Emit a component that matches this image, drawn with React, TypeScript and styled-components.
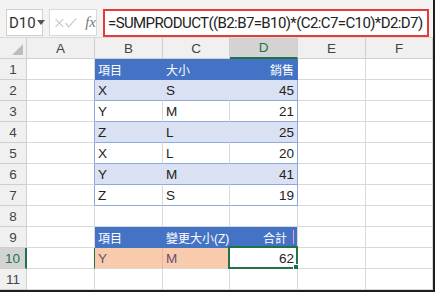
import styled, { createGlobalStyle } from 'styled-components';

const GlobalStyle = createGlobalStyle`
  html, body {
    margin: 0;
    padding: 0;
    background: #ffffff;
  }
  body {
    font-family: "Liberation Sans", "Noto Sans CJK TC", sans-serif;
  }
`;

const GREEN = '#217346';
const GRID = '#d9d9d9';
const BLUE_LINE = '#8ea9db';

type CellSpec = {
  text?: string;
  bg?: string;
  color?: string;
  right?: string;
  bottom?: string;
  align?: 'left' | 'right';
  cjk?: boolean;
  selected?: boolean;
  caret?: boolean;
};

const Frame = styled.div`
  width: 433px;
  height: 290px;
  border-right: 2px solid #1e1e1e;
  border-bottom: 2px solid #1e1e1e;
  overflow: hidden;
  display: flex;
  flex-direction: column;
  background: #fff;
`;

const FormulaBar = styled.div`
  height: 41px;
  background: #f3f3f3;
  display: flex;
  align-items: flex-start;
  padding: 9px 0 0 6px;
  box-sizing: border-box;
  gap: 6px;
`;

const NameBox = styled.div`
  width: 37px;
  height: 27px;
  box-sizing: border-box;
  background: #fff;
  border: 1px solid #cfcfcf;
  display: flex;
  align-items: center;
  padding-left: 2px;
  font-family: Roboto, sans-serif;
  font-size: 15px;
  color: #333;
`;

const Arrow = styled.span`
  width: 0;
  height: 0;
  margin-left: 1px;
  border-left: 4px solid transparent;
  border-right: 4px solid transparent;
  border-top: 5px solid #555;
`;

const FxBox = styled.div`
  width: 48px;
  height: 27px;
  box-sizing: border-box;
  background: #fff;
  border: 1px solid #dadada;
  display: flex;
  align-items: center;
  padding-left: 4px;
  gap: 2px;
`;

const FxMark = styled.span`
  font-family: "Liberation Serif", serif;
  font-style: italic;
  font-size: 15px;
  color: #7a7a7a;
  margin-left: 3px;
`;

const FormulaInput = styled.div`
  width: 326px;
  height: 28px;
  box-sizing: border-box;
  background: #fff;
  border: 2px solid #e43b3b;
  display: flex;
  align-items: center;
  padding-left: 3px;
  font-family: Roboto, sans-serif;
  font-size: 15px;
  letter-spacing: -0.6px;
  color: #222;
  white-space: nowrap;
`;

const Divider = styled.div`
  height: 6px;
  background: #f3f3f3;
  border-bottom: 1px solid #dadada;
`;

const Sheet = styled.div`
  display: grid;
  grid-template-columns: 27px 68px 68px 67px 68px 68px 1fr;
  grid-auto-rows: 21px;
  font-size: 13.5px;
`;

const Corner = styled.div`
  background: #f0f0f0;
  border-right: 1px solid #cfcfcf;
  border-bottom: 1px solid #cfcfcf;
  position: relative;
  &::after {
    content: '';
    position: absolute;
    right: 3px;
    bottom: 3px;
    border-left: 11px solid transparent;
    border-bottom: 11px solid #bdbdbd;
  }
`;

const ColHead = styled.div<{ $active?: boolean }>`
  background: ${(p) => (p.$active ? '#d3d3d3' : '#f0f0f0')};
  color: ${(p) => (p.$active ? GREEN : '#444')};
  border-right: 1px solid #cfcfcf;
  border-bottom: ${(p) => (p.$active ? `2px solid ${GREEN}` : '1px solid #cfcfcf')};
  display: flex;
  align-items: center;
  justify-content: center;
  box-sizing: border-box;
`;

const RowHead = styled.div<{ $active?: boolean }>`
  background: ${(p) => (p.$active ? '#d3d3d3' : '#f0f0f0')};
  color: ${(p) => (p.$active ? GREEN : '#444')};
  border-right: ${(p) => (p.$active ? `2px solid ${GREEN}` : '1px solid #cfcfcf')};
  border-bottom: 1px solid #cfcfcf;
  display: flex;
  align-items: center;
  justify-content: center;
  box-sizing: border-box;
`;

const Cell = styled.div<{
  $bg: string;
  $color: string;
  $right: string;
  $bottom: string;
  $align: string;
  $cjk?: boolean;
}>`
  background: ${(p) => p.$bg};
  color: ${(p) => p.$color};
  border-right: 1px solid ${(p) => p.$right};
  border-bottom: 1px solid ${(p) => p.$bottom};
  display: flex;
  align-items: center;
  justify-content: ${(p) => (p.$align === 'right' ? 'flex-end' : 'flex-start')};
  padding: 0 3px;
  box-sizing: border-box;
  white-space: nowrap;
  font-size: ${(p) => (p.$cjk ? '12px' : '13.5px')};
  position: relative;
`;

const Selection = styled.div`
  position: absolute;
  left: -2px;
  top: -2px;
  right: -1px;
  bottom: -1px;
  border: 2px solid ${GREEN};
  pointer-events: none;
  &::after {
    content: '';
    position: absolute;
    right: -4px;
    bottom: -4px;
    width: 5px;
    height: 5px;
    background: ${GREEN};
    border: 1px solid #fff;
  }
`;

const Caret = styled.span`
  display: inline-block;
  width: 1px;
  height: 14px;
  background: #f0a0c8;
  margin-left: 6px;
`;

const cols = ['A', 'B', 'C', 'D', 'E', 'F'];

const HEAD_BG = '#4472c4';
const BAND = '#d9e1f2';
const ORANGE = '#f8cbad';

const tableRows: [string, string, string][] = [
  ['X', 'S', '45'],
  ['Y', 'M', '21'],
  ['Z', 'L', '25'],
  ['X', 'L', '20'],
  ['Y', 'M', '41'],
  ['Z', 'S', '19'],
];

function buildRows(): CellSpec[][] {
  const rows: CellSpec[][] = [];
  const head = (text: string, extra: Partial<CellSpec> = {}): CellSpec => ({
    text,
    bg: HEAD_BG,
    color: '#fff',
    right: HEAD_BG,
    bottom: HEAD_BG,
    cjk: true,
    ...extra,
  });

  rows.push([{}, head('項目'), head('大小'), head('銷售', { align: 'right' }), {}, {}]);

  tableRows.forEach((r, i) => {
    const band = i % 2 === 0;
    const bg = band ? BAND : '#fff';
    const inner = band ? BAND : GRID;
    rows.push([
      { right: BLUE_LINE },
      { text: r[0], bg, right: inner, bottom: BLUE_LINE },
      { text: r[1], bg, right: inner, bottom: BLUE_LINE },
      { text: r[2], bg, right: BLUE_LINE, bottom: BLUE_LINE, align: 'right' },
      {},
      {},
    ]);
  });

  rows.push([{}, {}, {}, {}, {}, {}]);

  rows.push([
    {},
    head('項目'),
    head('變更大小(Z)'),
    head('合計', { right: GRID, align: 'right', caret: true }),
    {},
    {},
  ]);

  rows.push([
    { right: GREEN },
    { text: 'Y', bg: ORANGE, color: '#6e4d74', right: '#e5b89c', bottom: GRID },
    { text: 'M', bg: ORANGE, color: '#6e4d74', right: '#e5b89c', bottom: GRID },
    { text: '62', align: 'right', selected: true },
    {},
    {},
  ]);

  rows.push([{}, {}, {}, {}, {}, {}]);
  return rows;
}

export default function App() {
  const rows = buildRows();

  return (
    <>
      <GlobalStyle />
      <Frame>
        <FormulaBar>
          <NameBox>
            D10
            <Arrow />
          </NameBox>
          <FxBox>
            <svg width="34" height="16" viewBox="0 0 34 16">
              <path d="M2 3 L12 13 M12 3 L2 13" stroke="#c8c8c8" strokeWidth="1.6" fill="none" />
              <path d="M15 8 L19 13 L29 2" stroke="#c8c8c8" strokeWidth="1.6" fill="none" />
            </svg>
            <FxMark>fx</FxMark>
          </FxBox>
          <FormulaInput>=SUMPRODUCT((B2:B7=B10)*(C2:C7=C10)*D2:D7)</FormulaInput>
        </FormulaBar>
        <Divider />
        <Sheet>
          <Corner />
          {cols.map((c) => (
            <ColHead key={c} $active={c === 'D'}>
              {c}
            </ColHead>
          ))}
          {rows.map((row, ri) => [
            <RowHead key={`h${ri}`} $active={ri === 9}>
              {ri + 1}
            </RowHead>,
            ...row.map((cell, ci) => (
              <Cell
                key={`${ri}-${ci}`}
                $bg={cell.bg ?? '#fff'}
                $color={cell.color ?? '#222'}
                $right={cell.right ?? GRID}
                $bottom={cell.bottom ?? GRID}
                $align={cell.align ?? 'left'}
                $cjk={cell.cjk}
              >
                {cell.text}
                {cell.caret && <Caret />}
                {cell.selected && <Selection />}
              </Cell>
            )),
          ])}
        </Sheet>
      </Frame>
    </>
  );
}
